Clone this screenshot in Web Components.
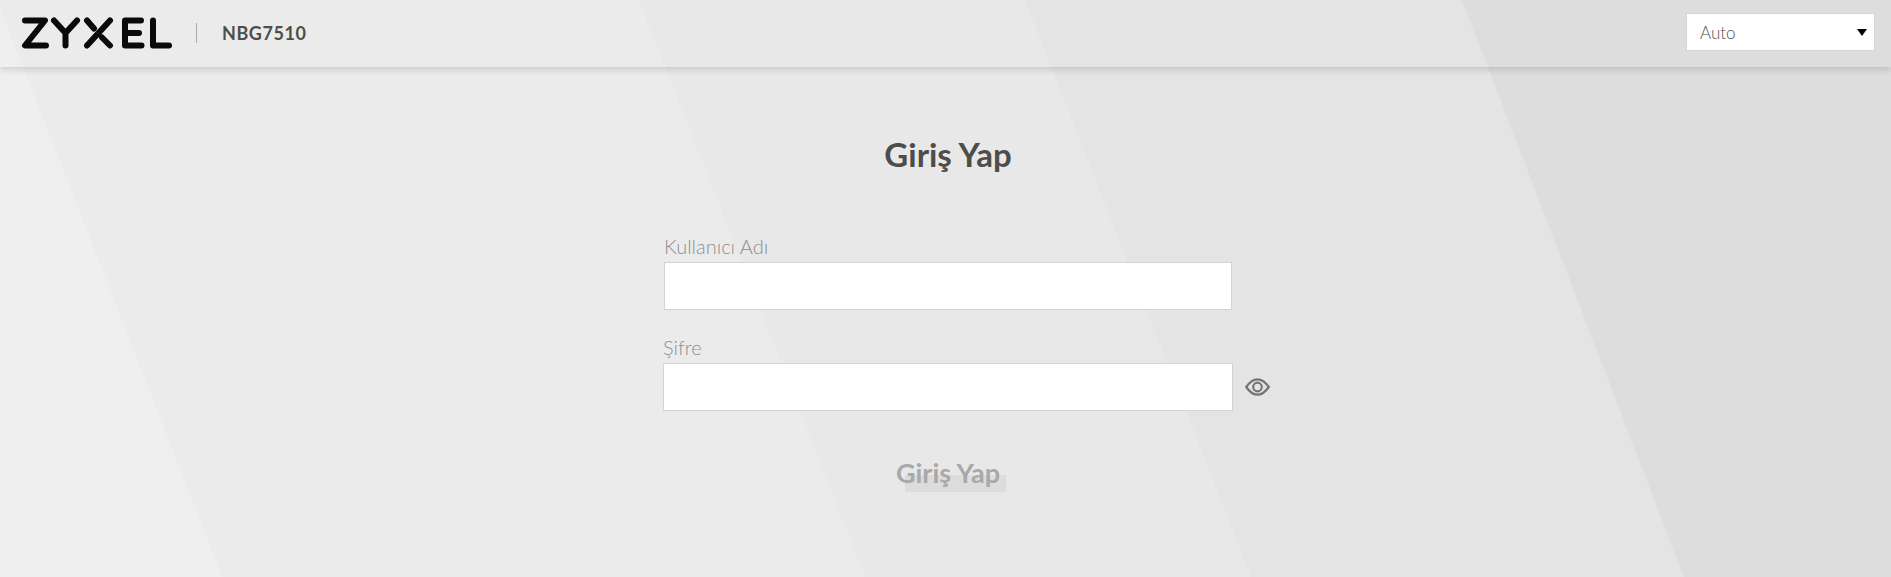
<!DOCTYPE html>
<html lang="tr">
<head>
<meta charset="utf-8">
<title>NBG7510</title>
<style>
  html, body { margin: 0; height: 100%; }
  body { font-family: "Lato", "Liberation Sans", sans-serif; }
</style>
</head>
<body>
<login-page>
  <top-bar slot="bar" model="NBG7510" value="Auto"></top-bar>
  <login-form></login-form>
</login-page>

<script>
// pagina completa: fondo con bandas diagonales
class LoginPage extends HTMLElement {
  constructor () {
    super();
    this.attachShadow({ mode: "open" });
  }
  connectedCallback () {
    this.shadowRoot.innerHTML = `
      <style>
        :host { display: block; position: relative; width: 100%; height: 577px; overflow: hidden; background: #efefef; }
        svg { position: absolute; inset: 0; width: 100%; height: 100%; }
        .content { position: relative; display: flex; flex-direction: column; height: 100%; }
      </style>
      <svg viewBox="0 0 1891 577" preserveAspectRatio="none" aria-hidden="true">
        <polygon fill="#ebebeb" points="-3,0 1891,0 1891,577 222,577"/>
        <polygon fill="#e8e8e8" points="639,0 1891,0 1891,577 865,577"/>
        <polygon fill="#e4e4e4" points="1025,0 1891,0 1891,577 1251,577"/>
        <polygon fill="#dddddd" points="1462,0 1891,0 1891,577 1684,577"/>
      </svg>
      <div class="content"><slot name="bar"></slot><slot></slot></div>
    `;
  }
}

class TopBar extends HTMLElement {
  constructor () {
    super();
    this.attachShadow({ mode: "open" });
  }
  connectedCallback () {
    this.shadowRoot.innerHTML = `
      <style>
        :host { display: flex; align-items: center; height: 67px; box-sizing: border-box; padding: 0 16px 2px 21px; box-shadow: 0 3px 6px rgba(0,0,0,.13); }
        .logo { width: 152px; height: 32px; display: block; }
        .sep { width: 1px; height: 20px; background: #a9a9a9; margin: 0 25px 0 23px; }
        .model { font-size: 18px; font-weight: 700; color: #4d4d4d; letter-spacing: .55px; }
        .pick { margin: 0 0 1px auto; width: 189px; height: 38px; box-sizing: border-box; background: #fff; border: 1px solid #d3d6dc; display: flex; align-items: center; justify-content: space-between; padding: 0 7px 0 13px; font-size: 17px; font-weight: 300; color: #4f4f4f; }
        .arrow { width: 0; height: 0; border-left: 5px solid transparent; border-right: 5px solid transparent; border-top: 7px solid #000; }
      </style>
      <svg class="logo" viewBox="0 0 152 32" fill="none" stroke="#0a0a0a" stroke-width="6" stroke-linecap="round" stroke-linejoin="round" role="img" aria-label="ZYXEL">
        <path d="M4 3.500H24L4 28.500H25"/>
        <path d="M33 3.500L44.500 16L56 3.500M44.500 16V28.500"/>
        <path d="M66 3.500L73 11.500M89 3.500L66 28.500M81 20.500L89 28.500"/>
        <path d="M120 3.500H104V28.500H120.500M104 16H118"/>
        <path d="M132 3.500V28.500H148"/>
      </svg>
      <span class="sep"></span>
      <span class="model">${this.getAttribute("model")}</span>
      <div class="pick"><span>${this.getAttribute("value")}</span><span class="arrow"></span></div>
    `;
  }
}

class TextField extends HTMLElement {
  constructor () {
    super();
    this.attachShadow({ mode: "open" });
  }
  connectedCallback () {
    this.shadowRoot.innerHTML = `
      <style>
        :host { display: block; width: var(--field-width, 568px); position: relative; }
        label { display: block; font-size: 20px; line-height: 22px; color: #8f8f8f; font-weight: 300; margin-bottom: 5px; }
        .box { height: 48px; box-sizing: border-box; background: #fff; border: 1px solid #d0d3da; }
        ::slotted(*) { position: absolute; left: calc(100% + 12px); bottom: 15px; }
      </style>
      <label>${this.getAttribute("label")}</label>
      <div class="box"></div>
      <slot></slot>
    `;
  }
}

class LoginForm extends HTMLElement {
  constructor () {
    super();
    this.attachShadow({ mode: "open" });
  }
  connectedCallback () {
    this.shadowRoot.innerHTML = `
      <style>
        :host { display: flex; flex-direction: column; align-items: center; padding-left: 5px; }
        h1 { margin: 67px 0 0; font-size: 33px; line-height: 40px; font-weight: 700; color: #4d4d4d; }
        .fields { display: flex; flex-direction: column; align-items: center; gap: 26px; margin-top: 61px; }
        .submit { margin-top: 45px; position: relative; z-index: 0; font-size: 27px; line-height: 34px; font-weight: 700; color: #a9a9a9; }
        .submit::before { content: ""; position: absolute; left: 9px; right: -6px; top: 19px; height: 17px; background: #dcdcdc; z-index: -1; }
      </style>
      <h1>Giriş Yap</h1>
      <div class="fields">
        <text-field label="Kullanıcı Adı"></text-field>
        <text-field label="Şifre" style="--field-width:570px">
          <svg width="25" height="18" viewBox="0 0 25 18" fill="none" stroke="#757575" stroke-width="2.200">
            <path d="M1.200 9C5 3.500 8.500 1.300 12.500 1.300S20 3.500 23.800 9C20 14.500 16.500 16.700 12.500 16.700S5 14.500 1.200 9Z"/>
            <circle cx="12.500" cy="9" r="4.300"/>
          </svg>
        </text-field>
      </div>
      <div class="submit">Giriş Yap</div>
    `;
  }
}

customElements.define("login-page", LoginPage);
customElements.define("top-bar", TopBar);
customElements.define("text-field", TextField);
customElements.define("login-form", LoginForm);
</script>
</body>
</html>
